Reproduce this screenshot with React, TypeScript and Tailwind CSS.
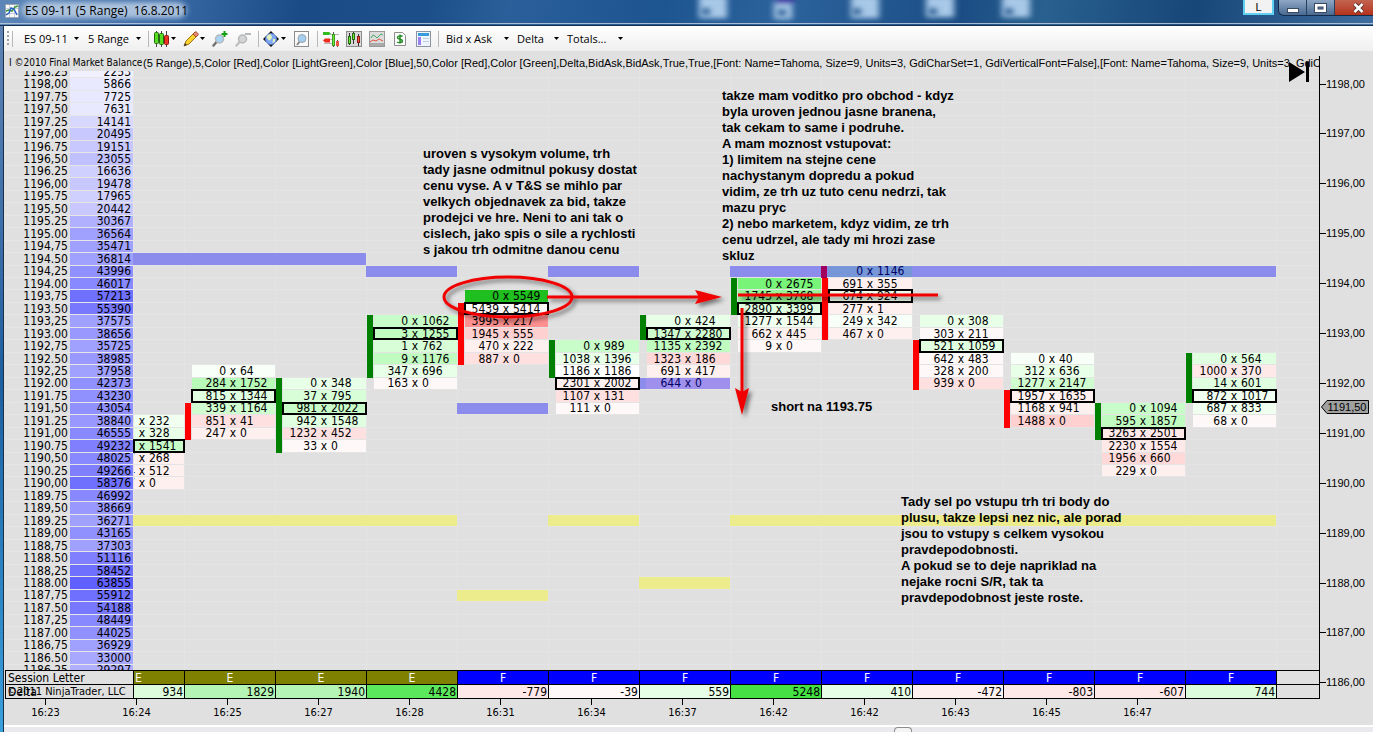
import React from 'react';

interface Bar {
    start: number;
    body?: [number, number, 'up' | 'down'];
    poc: number;
    high: number;
    low: number;
    cells: [string, string][];
    deltas?: number[];
}

const PRICES = [
    '1198.25', '1198,00', '1197.75', '1197,50', '1197.25', '1197,00', '1196.75', '1196,50', '1196.25', '1196,00',
    '1195.75', '1195,50', '1195.25', '1195.00', '1194,75', '1194.50', '1194,25', '1194.00', '1193,75', '1193.50',
    '1193,25', '1193.00', '1192,75', '1192.50', '1192,25', '1192.00', '1191.75', '1191,50', '1191.25', '1191,00',
    '1190.75', '1190,50', '1190.25', '1190,00', '1189.75', '1189,50', '1189.25', '1189,00', '1188,75', '1188.50',
    '1188,25', '1188.00', '1187,75', '1187.50', '1187,25', '1187.00', '1186,75', '1186.50', '1186.25',
];

const VOLUMES = [
    2253, 5866, 7725, 7631, 14141, 20495, 19151, 23055, 16636, 19478,
    17965, 20442, 30367, 36564, 35471, 36814, 43996, 46017, 57213, 55390,
    37575, 38656, 35725, 38985, 37958, 42373, 43230, 43054, 38840, 46555,
    49232, 48025, 49266, 58376, 46992, 38669, 36271, 43165, 37303, 51116,
    58452, 63855, 55912, 54188, 48449, 44025, 36929, 33000, 29297,
];

// rows are indexes into PRICES
const BARS: Bar[] = [
    { start: 28, poc: 30, high: 15, low: 36, cells: [['', '232'], ['', '328'], ['7', '1541'], ['7', '268'], ['4', '512'], ['7', '0']], deltas: [232, 310, 1100, -350, -350, -350] },
    { start: 24, body: [27, 29, 'down'], poc: 26, high: 15, low: 36, cells: [['0', '64'], ['284', '1752'], ['815', '1344'], ['339', '1164'], ['851', '41'], ['247', '0']] },
    { start: 25, body: [25, 30, 'up'], poc: 27, high: 15, low: 36, cells: [['0', '348'], ['37', '795'], ['981', '2022'], ['942', '1548'], ['1232', '452'], ['33', '0']] },
    { start: 20, body: [20, 24, 'up'], poc: 21, high: 16, low: 36, cells: [['0', '1062'], ['3', '1255'], ['1', '762'], ['9', '1176'], ['347', '696'], ['163', '0']] },
    { start: 18, body: [19, 23, 'down'], poc: 19, high: 27, low: 42, cells: [['0', '5549'], ['5439', '5414'], ['3995', '217'], ['1945', '555'], ['470', '222'], ['887', '0']] },
    { start: 22, body: [22, 24, 'up'], poc: 25, high: 16, low: 36, cells: [['0', '989'], ['1038', '1396'], ['1186', '1186'], ['2301', '2002'], ['1107', '131'], ['111', '0']] },
    { start: 20, body: [20, 21, 'up'], poc: 21, high: 25, low: 41, cells: [['0', '424'], ['1347', '2280'], ['1135', '2392'], ['1323', '186'], ['691', '417'], ['644', '0']] },
    { start: 17, body: [17, 19, 'up'], poc: 19, high: 16, low: 36, cells: [['0', '2675'], ['1745', '3768'], ['2890', '3399'], ['1277', '1544'], ['662', '445'], ['9', '0']] },
    { start: 16, body: [16, 21, 'down'], poc: 18, high: 16, low: 36, cells: [['0', '1146'], ['691', '355'], ['674', '924'], ['277', '1'], ['249', '342'], ['467', '0']] },
    { start: 20, body: [22, 25, 'down'], poc: 22, high: 16, low: 36, cells: [['0', '308'], ['303', '211'], ['521', '1059'], ['642', '483'], ['328', '200'], ['939', '0']] },
    { start: 23, body: [26, 28, 'down'], poc: 26, high: 16, low: 36, cells: [['0', '40'], ['312', '636'], ['1277', '2147'], ['1957', '1635'], ['1168', '941'], ['1488', '0']] },
    { start: 27, body: [27, 29, 'up'], poc: 29, high: 16, low: 36, cells: [['0', '1094'], ['595', '1857'], ['3263', '2501'], ['2230', '1554'], ['1956', '660'], ['229', '0']] },
    { start: 23, body: [23, 26, 'up'], poc: 26, high: 16, low: 36, cells: [['0', '564'], ['1000', '370'], ['14', '601'], ['872', '1017'], ['687', '833'], ['68', '0']] },
];

const SESSIONS: [string, string, string][] = [
    ['E', '934', 'bg-[#dcfcdc]'],
    ['E', '1829', 'bg-[#b4f4b4]'],
    ['E', '1940', 'bg-[#b4f4b4]'],
    ['E', '4428', 'bg-[#5ce85c]'],
    ['F', '-779', 'bg-[#ffe8e8]'],
    ['F', '-39', 'bg-[#fff8f8]'],
    ['F', '559', 'bg-[#e6fee6]'],
    ['F', '5248', 'bg-[#44e044]'],
    ['F', '410', 'bg-[#e6fee6]'],
    ['F', '-472', 'bg-[#fff0f0]'],
    ['F', '-803', 'bg-[#ffe8e8]'],
    ['F', '-607', 'bg-[#ffe8e8]'],
    ['F', '744', 'bg-[#dcfcdc]'],
];

const TIMES = ['16:23', '16:24', '16:25', '16:27', '16:28', '16:31', '16:34', '16:37', '16:42', '16:42', '16:43', '16:45', '16:47'];

const SCALE = ['1198,00', '1197,00', '1196,00', '1195,00', '1194,00', '1193,00', '1192,00', '1191,00', '1190,00', '1189,00', '1188,00', '1187,00', '1186,00'];

const INDICATOR =
    '(5 Range),5,Color [Red],Color [LightGreen],Color [Blue],50,Color [Red],Color [Green],Delta,BidAsk,BidAsk,True,True,[Font: Name=Tahoma, Size=9, Units=3, GdiCharSet=1, GdiVerticalFont=False],[Font: Name=Tahoma, Size=9, Units=3, GdiCharSet=1';

const volumeColor = (volume: number) => {
    const c = Math.round((248 - volume / 420) / 8) * 8;
    return `rgb(${c}, ${c}, 255)`;
};

const deltaColor = (delta: number) => {
    if (delta > 5000) return '#1fbf1f';
    const c = Math.max(96, Math.round((250 - Math.abs(delta) / (delta > 0 ? 21 : 35)) / 8) * 8);
    if (delta === 0) return '#ffffff';
    if (delta > 0) return `rgb(${c}, ${Math.min(255, 232 + Math.round(c / 10))}, ${c})`;
    return `rgb(255, ${c}, ${c})`;
};

export default function App() {
    return (
        <div className="relative flex h-screen min-h-[600px] flex-col overflow-hidden bg-[#e0e0e0] font-['DejaVu_Sans_Condensed','DejaVu_Sans',sans-serif] text-[12px] leading-none text-black">
            <TitleBar />
            <div className="flex min-h-0 flex-1">
                <div className="w-1 shrink-0 border-r border-[#18324e] bg-gradient-to-b from-[#5f83b5] via-[#1d5fa0] to-[#3aa0dc]" />
                <div className="flex min-w-0 flex-1 flex-col">
                    <Toolbar />
                    <div className="flex min-h-0 flex-1 pl-px">
                        <div className="flex min-w-0 flex-1 flex-col">
                            <IndicatorLine />
                            <Footprint />
                            <SessionTable />
                        </div>
                        <PriceScale />
                    </div>
                    <TimeAxis />
                    <div className="flex h-[7px] justify-start border-t-2 border-white bg-[#eaeaee]">
                        <div className="ml-[65%] h-full w-[18px] rounded-t border border-b-0 border-[#8c8c8c] bg-[#f4f4f4]" />
                    </div>
                </div>
            </div>
            <Annotations />
        </div>
    );
}

const TitleBar: React.FC = () => {
    return (
        <header className="relative flex h-[26px] shrink-0 items-start justify-between border-b border-[#17304f] bg-[linear-gradient(100deg,#5d86b8_0%,#3a6aa6_12%,#1b4b86_22%,#1c4f8a_31%,#2a5f9a_37%,#1d5590_48%,#2c639c_57%,#1b4d84_70%,#28608f_76%,#174678_87%,#3f6da0_100%)]">
            <svg className="absolute inset-0 h-full w-full" viewBox="0 0 1373 26" preserveAspectRatio="none" aria-hidden="true">
                <defs>
                    <filter id="soft" x="-30%" y="-60%" width="160%" height="220%">
                        <feGaussianBlur stdDeviation="3" />
                    </filter>
                </defs>
                <rect x="22" y="2" width="164" height="17" rx="8" fill="#bdd0e6" opacity="0.85" filter="url(#soft)" />
                <g filter="url(#soft)" fill="#a9c9e8">
                    <rect x="699" y="-4" width="28" height="23" />
                    <rect x="774" y="2" width="18" height="18" />
                    <rect x="776" y="-4" width="18" height="8" fill="#3f35a8" />
                    <rect x="851" y="-4" width="28" height="23" />
                    <rect x="926" y="-4" width="28" height="22" />
                    <rect x="1002" y="-4" width="28" height="22" />
                </g>
                <g filter="url(#soft)" fill="#27598f">
                    <circle cx="706" cy="12" r="4" />
                    <circle cx="782" cy="13" r="4" />
                    <circle cx="857" cy="12" r="4" />
                    <circle cx="933" cy="12" r="4" />
                    <circle cx="1009" cy="12" r="4" />
                </g>
                <rect y="24" width="1373" height="1" fill="#b4c6da" />
            </svg>
            <div className="relative flex items-center gap-[6px] pl-[5px] pt-[3px]">
                <svg width="14" height="14" viewBox="0 0 14 14" aria-hidden="true">
                    <rect x="0.5" y="0.5" width="13" height="13" fill="#fbfbfd" stroke="#9aa5b5" />
                    <path d="M4.500 1v12M9.500 1v12M1 4.500h12M1 9.500h12" stroke="#c9ced8" />
                    <path d="M1 7l3-1 3 1 3-4 3-1" fill="none" stroke="#3a9a3a" strokeWidth="1.500" />
                    <path d="M1 11l3-2 2-5 3 1 3 6" fill="none" stroke="#2a5fc8" strokeWidth="1.500" />
                </svg>
                <h1 className="whitespace-pre font-['Open_Sans',sans-serif] text-[12px] leading-4">ES 09-11 (5 Range)  16.8.2011</h1>
            </div>
            <div className="relative flex items-start gap-1 font-['Liberation_Sans',sans-serif]">
                <button className="h-[15px] w-[31px] border-2 border-t-0 border-[#5fd0f2] bg-[#f2f2f2] text-[11px] leading-3">L</button>
                <div className="flex h-4 overflow-hidden rounded-bl-md border border-t-0 border-r-0 border-[#142a48]">
                    <button aria-label="Minimize" className="flex w-7 items-center justify-center border-r border-[#26405f] bg-gradient-to-b from-[#8fa7c4] to-[#4a6a92]">
                        <svg width="12" height="12" viewBox="0 0 12 12"><rect x="0.500" y="6.500" width="11" height="4" fill="#fff" stroke="#3b4a60" /></svg>
                    </button>
                    <button aria-label="Maximize" className="flex w-7 items-center justify-center border-r border-[#26405f] bg-gradient-to-b from-[#8fa7c4] to-[#4a6a92]">
                        <svg width="13" height="12" viewBox="0 0 13 12">
                            <rect x="0.500" y="1.500" width="12" height="9" fill="#fff" stroke="#3b4a60" />
                            <rect x="4" y="5" width="5" height="2" fill="#5a7aa2" stroke="#3b4a60" />
                        </svg>
                    </button>
                    <button aria-label="Close" className="flex w-[38px] items-center justify-center bg-gradient-to-b from-[#c26350] to-[#b5301a] pl-2">
                        <svg width="13" height="12" viewBox="0 0 13 12">
                            <path d="M2.500 2l8 8M10.500 2l-8 8" stroke="#4a2a2a" strokeWidth="4" />
                            <path d="M2.500 2l8 8M10.500 2l-8 8" stroke="#fff" strokeWidth="2.500" />
                        </svg>
                    </button>
                </div>
            </div>
        </header>
    );
};

const Caret: React.FC = () => (
    <svg width="5" height="3" viewBox="0 0 5 3" className="shrink-0" aria-hidden="true">
        <path d="M0 0h5L2.500 3z" fill="#000" />
    </svg>
);

const Separator: React.FC = () => <div className="h-4 w-px shrink-0 bg-[#b8b8b8]" />;

const MenuButton: React.FC<{ label: string; width: string }> = ({ label, width }) => (
    <button className={`flex shrink-0 items-center justify-between whitespace-nowrap ${width}`}>
        {label}
        <Caret />
    </button>
);

const Magnifier: React.FC<{ glass: string; handle: string }> = ({ glass, handle }) => (
    <>
        <path d="M4.500 11l-3 3.500" stroke={handle} strokeWidth="2.500" strokeLinecap="round" />
        <circle cx="7.500" cy="8" r="4" fill={glass} stroke="#b4b8bc" strokeWidth="1.500" />
    </>
);

const Toolbar: React.FC = () => {
    return (
        <nav className="flex h-[25px] shrink-0 items-center bg-gradient-to-b from-white to-[#efefef] font-['Open_Sans',sans-serif] text-[11px]">
            <svg width="3" height="15" viewBox="0 0 3 15" className="ml-[3px] shrink-0" aria-hidden="true">
                <path d="M1 0v15" stroke="#a4a4a4" strokeWidth="2" strokeDasharray="2 2" />
            </svg>
            <div className="ml-0.5 mr-[11px]"><Separator /></div>
            <MenuButton label="ES 09-11" width="w-[55px]" />
            <div className="w-[9px] shrink-0" />
            <MenuButton label="5 Range" width="w-[53px]" />
            <div className="ml-[7px] mr-[5px]"><Separator /></div>
            <button aria-label="Chart style" className="flex w-[22px] shrink-0 items-center justify-between">
                <svg width="15" height="16" viewBox="0 0 15 16">
                    <path d="M2.500 0v16M7.500 0v16M12.500 0v16" stroke="#444" />
                    <rect x="0.500" y="1.500" width="4" height="11" rx="1" fill="#55dd22" stroke="#2b6a14" />
                    <rect x="5.500" y="2.500" width="4" height="11" rx="1" fill="#55dd22" stroke="#2b6a14" />
                    <rect x="10.500" y="4.500" width="4" height="9" rx="1" fill="#ee3322" stroke="#8c1a10" />
                </svg>
                <Caret />
            </button>
            <button aria-label="Drawing tools" className="ml-[7px] flex w-[22px] shrink-0 items-center justify-between">
                <svg width="16" height="16" viewBox="0 0 16 16">
                    <path d="M1 15l2-5 8-8 3 3-8 8z" fill="#f7d22c" stroke="#a87414" />
                    <path d="M10 3l2-2c1-1 4 2 3 3l-2 2z" fill="#e88a72" stroke="#9c4a30" />
                    <path d="M1 15l1-3 2 2z" fill="#333" />
                </svg>
                <Caret />
            </button>
            <button aria-label="Zoom in" className="ml-[7px] shrink-0">
                <svg width="16" height="16" viewBox="0 0 16 16">
                    <Magnifier glass="#a9d3f2" handle="#707070" />
                    <path d="M12.500 0v6M9.500 3h6" stroke="#14a014" strokeWidth="2" />
                </svg>
            </button>
            <button aria-label="Zoom out" className="ml-[7px] shrink-0">
                <svg width="16" height="16" viewBox="0 0 16 16">
                    <Magnifier glass="#d4d4d4" handle="#c0c0c0" />
                    <path d="M10 3h6" stroke="#b8b8b8" strokeWidth="2" />
                </svg>
            </button>
            <div className="ml-[7px] mr-[4px]"><Separator /></div>
            <button aria-label="Cursor" className="flex w-[23px] shrink-0 items-center justify-between">
                <svg width="16" height="16" viewBox="0 0 16 16">
                    <path d="M8 0l3 3H5zM8 16l3-3H5zM0 8l3-3v6zM16 8l-3-3v6z" fill="#111" />
                    <circle cx="8" cy="8" r="5.500" fill="#7fa8f4" stroke="#5674c0" />
                    <path d="M3.500 6c1-2 3-3 4.500-2.500l1 3-2 3-2-1z" fill="#e4f4b8" />
                    <path d="M10 8l2.500 0-1 3-2 1z" fill="#e4f4b8" />
                </svg>
                <Caret />
            </button>
            <button aria-label="Data box" className="ml-2 shrink-0">
                <svg width="15" height="16" viewBox="0 0 15 16">
                    <rect x="0.500" y="0.500" width="14" height="15" fill="#fafafa" stroke="#8c8c8c" />
                    <path d="M6 10l-3 4" stroke="#8a8a8a" strokeWidth="2" />
                    <circle cx="8" cy="7.500" r="4" fill="#a4cff0" stroke="#98a4ae" />
                </svg>
            </button>
            <div className="ml-2 mr-[5px]"><Separator /></div>
            <button aria-label="Chart trader" className="shrink-0">
                <svg width="16" height="16" viewBox="0 0 16 16">
                    <path d="M7 3.500h9M7 8.500h4M1 12.500h9" stroke="#b4b4b4" />
                    <path d="M0 1h6l2 1.500L6 4H0z" fill="#33bb22" />
                    <path d="M0 9.500l2-2h5v4H2z" fill="#ee2a1a" />
                    <path d="M10.500 1v15M14.500 9v7" stroke="#555" />
                    <rect x="9.500" y="3.500" width="2" height="11" fill="#66ee33" stroke="#3c9a22" />
                    <rect x="13" y="10" width="3" height="5" fill="#ee5544" />
                </svg>
            </button>
            <button aria-label="Data series" className="ml-[7px] shrink-0">
                <svg width="16" height="16" viewBox="0 0 16 16">
                    <rect x="0.500" y="0.500" width="15" height="15" fill="#d8d8d8" stroke="#8c8c8c" />
                    <path d="M3.500 2v12M7.500 1v12M12.500 3v12" stroke="#333" />
                    <rect x="2.500" y="5.500" width="2" height="7" fill="#66ee33" stroke="#2b6a14" />
                    <rect x="6.500" y="2.500" width="2" height="6" fill="#66ee33" stroke="#2b6a14" />
                    <rect x="11.500" y="5.500" width="2" height="6" fill="#ff5544" stroke="#8c1a10" />
                </svg>
            </button>
            <button aria-label="Indicators" className="ml-[7px] shrink-0">
                <svg width="16" height="16" viewBox="0 0 16 16">
                    <rect x="0.500" y="0.500" width="15" height="15" fill="#dcdcdc" stroke="#9a9a9a" />
                    <path d="M1 12h14v3H1z" fill="#aaa" />
                    <path d="M2 7l2-3 2 1 2 2 4-4 2 1" fill="none" stroke="#44aa66" />
                    <path d="M1 11l3-2 3 1 3-2 4 2" fill="none" stroke="#dd5544" />
                </svg>
            </button>
            <button aria-label="Strategies" className="ml-[9px] shrink-0">
                <svg width="12" height="16" viewBox="0 0 12 16">
                    <path d="M0.500 1.500h8l3 3v10h-11z" fill="#fff" stroke="#8c8c8c" />
                    <path d="M8.500 5.500C7.500 4.500 3.500 4.500 3.500 6.500s5 1.500 5 3.500-4 2-5.500 1M6 3.500v9" fill="none" stroke="#228a22" strokeWidth="1.500" />
                </svg>
            </button>
            <button aria-label="Properties" className="ml-[10px] shrink-0">
                <svg width="15" height="16" viewBox="0 0 15 16">
                    <rect x="0.500" y="0.500" width="14" height="15" fill="#eef4fc" stroke="#8a94a4" />
                    <rect x="2" y="2" width="11" height="3" fill="#3a9ade" />
                    <rect x="2" y="6" width="3" height="8" fill="#9a80ee" />
                    <path d="M7 7.500h6M7 10.500h6" stroke="#c4cede" />
                </svg>
            </button>
            <div className="mx-[7px]"><Separator /></div>
            <MenuButton label="Bid x Ask" width="w-[63px]" />
            <div className="w-2 shrink-0" />
            <MenuButton label="Delta" width="w-[42px]" />
            <div className="w-2 shrink-0" />
            <MenuButton label="Totals..." width="w-[56px]" />
        </nav>
    );
};

const IndicatorLine: React.FC = () => {
    return (
        <div className="flex h-5 shrink-0 items-center overflow-hidden whitespace-pre pt-1 text-[11px]">
            <span className="w-[138px] shrink-0 pl-1 text-[10px]">I ©2010 Final Market Balance</span>
            <span className="font-['Liberation_Sans',sans-serif]">{INDICATOR}</span>
        </div>
    );
};

const Footprint: React.FC = () => {
    return (
        <div className="min-h-0 flex-1 overflow-hidden">
            <table className="-mt-[5px] grid h-[calc(100%+12px)] grid-cols-[65px_63px_51fr_repeat(12,91fr)_43fr] grid-rows-[repeat(49,minmax(0,1fr))]">
                <tbody className="contents">
                    {PRICES.map((price, row) => (
                        <tr key={price} className="contents">
                            <th scope="row" className="flex items-center justify-end overflow-hidden border-b border-[#e6e6e6] pr-0.5 font-normal">{price}</th>
                            <td
                                className="flex items-center justify-end overflow-hidden border-b border-[#e6e6e6] pr-0.5"
                                style={{ backgroundColor: volumeColor(VOLUMES[row]) }}
                            >
                                {VOLUMES[row]}
                            </td>
                            {BARS.map((bar, i) => (
                                <FootprintCell key={i} bar={bar} row={row} />
                            ))}
                            <td className="border-b border-l border-[#e4e4e4]" />
                        </tr>
                    ))}
                </tbody>
            </table>
        </div>
    );
};

const FootprintCell: React.FC<{ bar: Bar; row: number }> = ({ bar, row }) => {
    const index = row - bar.start;
    const cell = bar.cells[index];
    const inBody = bar.body && row >= bar.body[0] && row <= bar.body[1];
    const isHigh = bar.high === row;
    const isPoc = bar.poc === row;
    const band = isHigh ? 'bg-[#8c8cec] border-[#e4e4e4]' : bar.low === row ? 'bg-[#ecec8c] border-[#e4e4e4]' : 'border-l border-[#e4e4e4]';
    const bodyColor = !inBody ? '' : bar.body![2] === 'up' ? 'bg-[#008000]' : isHigh ? 'bg-[#a0005c]' : 'bg-[#ff0000]';

    const background = () => {
        if (isHigh) return cell[1] === '0' ? '#a090ee' : '#7696d8';
        return deltaColor(bar.deltas ? bar.deltas[index] : Number(cell[1]) - Number(cell[0]));
    };

    return (
        <td className={`flex min-w-0 justify-end border-b ${band}`}>
            <div className={`-mb-px w-[6px] shrink-0 ${bar.body ? '' : 'hidden'} ${bodyColor}`} />
            <div className={`flex min-w-0 flex-1 justify-end ${bar.body ? 'ml-px' : ''}`}>
                {cell && (
                    <div
                        className={`flex w-full items-center justify-end ${isPoc ? 'relative z-10 outline-2 -outline-offset-1 outline-black' : ''} ${bar.body ? '' : 'overflow-hidden'} ${isHigh ? 'text-[#000060]' : ''}`}
                        style={{ backgroundColor: background() }}
                    >
                        <span className="w-[34px] shrink-0 text-right">{cell[0]}</span>
                        <span className="w-[14px] shrink-0 text-center">x</span>
                        <span className="w-[35px] shrink-0">{cell[1]}</span>
                    </div>
                )}
            </div>
        </td>
    );
};

const SessionTable: React.FC = () => {
    return (
        <table className="grid shrink-0 grid-cols-[128px_51fr_repeat(12,91fr)_43fr] grid-rows-[14px_14px] border-b border-black">
            <tbody className="contents">
                <tr className="contents">
                    <th scope="row" className="flex items-center whitespace-nowrap border-l border-t border-black pl-0.5 font-normal">Session Letter</th>
                    {SESSIONS.map(([letter], i) => (
                        <td
                            key={i}
                            className={`flex items-center border-l border-t border-black text-white ${i === 0 ? 'pl-px' : 'justify-center'} ${letter === 'E' ? 'bg-[#808000]' : 'bg-[#0000ff]'}`}
                        >
                            {letter}
                        </td>
                    ))}
                    <td className="border-l border-t border-black" />
                </tr>
                <tr className="contents">
                    <th scope="row" className="relative flex items-center whitespace-nowrap border-l border-t border-black pl-0.5 font-normal">
                        Delta
                        <span className="absolute left-px top-px text-[11px]">©2011 NinjaTrader, LLC</span>
                    </th>
                    {SESSIONS.map(([, delta, color], i) => (
                        <td key={i} className={`flex items-center justify-end border-l border-t border-black pr-px ${color}`}>{delta}</td>
                    ))}
                    <td className="border-l border-t border-black" />
                </tr>
            </tbody>
        </table>
    );
};

const PriceScale: React.FC = () => {
    return (
        <div className="relative mt-[5px] flex w-[54px] shrink-0 flex-col justify-between border-l border-black pb-[10px] pt-[22px] font-['Liberation_Sans',sans-serif]">
            {SCALE.map((price) => (
                <div key={price} className="flex h-3 items-center">
                    <div className="h-px w-[6px] bg-black" />
                    <span className="text-[11px]">{price}</span>
                </div>
            ))}
            <div className="absolute left-px top-[53.500%] flex h-[14px] w-[48px] items-center justify-center pl-1 text-[11px]">
                <svg className="absolute inset-0" width="48" height="14" viewBox="0 0 48 14" aria-hidden="true">
                    <path d="M0.500 7L6 0.500h41.500v13H6z" fill="#a0a0a0" stroke="#000" />
                </svg>
                <span className="relative">1191,50</span>
            </div>
        </div>
    );
};

const TimeAxis: React.FC = () => {
    return (
        <div className="grid h-[26px] shrink-0 grid-cols-[87px_repeat(12,91fr)_190fr] text-[11px]">
            {TIMES.map((time, i) => (
                <div key={i} className={`flex flex-col items-center ${i === 0 ? 'pr-1' : ''}`}>
                    <div className="mb-0.5 h-[6px] w-px bg-black" />
                    {time}
                </div>
            ))}
        </div>
    );
};

const Note: React.FC<{ className: string; lines: string[] }> = ({ className, lines }) => (
    <p className={`absolute whitespace-nowrap font-['Liberation_Sans',sans-serif] text-[13px] font-bold leading-4 ${className}`}>
        {lines.map((line) => (
            <span key={line} className="block">{line}</span>
        ))}
    </p>
);

const Annotations: React.FC = () => {
    return (
        <div className="pointer-events-none absolute inset-0 z-20">
            <svg className="absolute inset-0 h-full w-full" viewBox="0 0 1373 732" preserveAspectRatio="none" aria-hidden="true">
                <defs>
                    <filter id="shadow" x="0" y="0" width="1373" height="732" filterUnits="userSpaceOnUse">
                        <feDropShadow dx="3" dy="3" stdDeviation="2" floodColor="#000" floodOpacity="0.5" />
                    </filter>
                </defs>
                <g filter="url(#shadow)" stroke="#f00000" fill="none" strokeWidth="3">
                    <ellipse cx="508" cy="297" rx="64" ry="20" />
                    <path d="M547 297h152" />
                    <path d="M738 295h200" />
                    <path d="M742 308v84" />
                    <path d="M722 297l-27-7 4 7-4 7z" fill="#f00000" stroke="none" />
                    <path d="M742 415l-7-27 7 4 7-4z" fill="#f00000" stroke="none" />
                </g>
                <path d="M1289 62l16 10-16 10zM1306 62h3v20h-3z" fill="#000" />
            </svg>
            <Note
                className="left-[423px] top-[146px]"
                lines={[
                    'uroven s vysokym volume, trh',
                    'tady jasne odmitnul pokusy dostat',
                    'cenu vyse. A v T&S se mihlo par',
                    'velkych objednavek za bid, takze',
                    'prodejci ve hre. Neni to ani tak o',
                    'cislech, jako spis o sile a rychlosti',
                    's jakou trh odmitne danou cenu',
                ]}
            />
            <Note
                className="left-[722px] top-[88px]"
                lines={[
                    'takze mam voditko pro obchod - kdyz',
                    'byla uroven jednou jasne branena,',
                    'tak cekam to same i podruhe.',
                    'A mam moznost vstupovat:',
                    '1) limitem na stejne cene',
                    'nachystanym dopredu a pokud',
                    'vidim, ze trh uz tuto cenu nedrzi, tak',
                    'mazu pryc',
                    '2) nebo marketem, kdyz vidim, ze trh',
                    'cenu udrzel, ale tady mi hrozi zase',
                    'skluz',
                ]}
            />
            <Note className="left-[771px] top-[399px]" lines={['short na 1193.75']} />
            <Note
                className="left-[901px] top-[494px]"
                lines={[
                    'Tady sel po vstupu trh tri body do',
                    'plusu, takze lepsi nez nic, ale porad',
                    'jsou to vstupy s celkem vysokou',
                    'pravdepodobnosti.',
                    'A pokud se to deje napriklad na',
                    'nejake rocni S/R, tak ta',
                    'pravdepodobnost jeste roste.',
                ]}
            />
        </div>
    );
};
